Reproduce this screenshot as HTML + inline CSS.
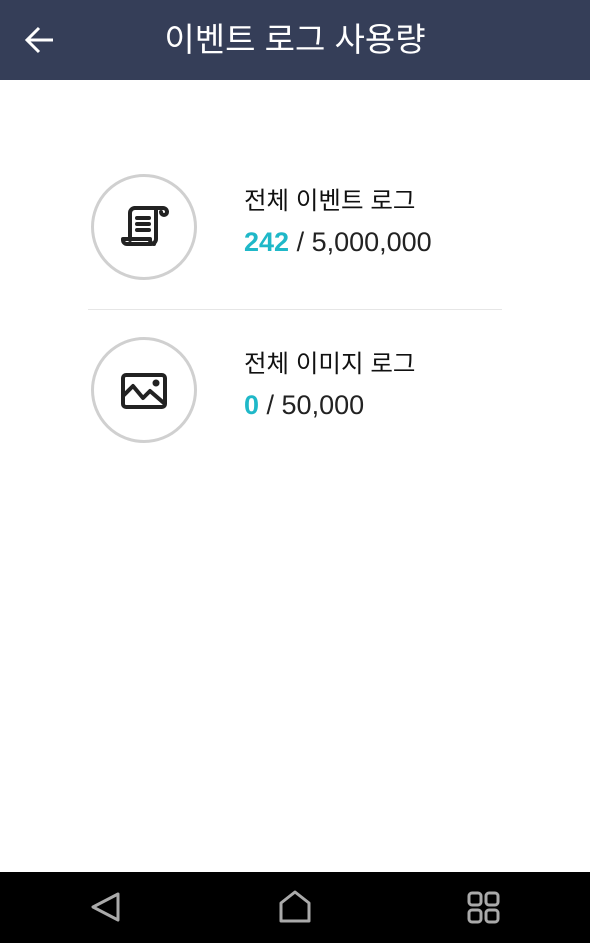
<!DOCTYPE html>
<html><head><meta charset="utf-8"><style>
body{margin:0;width:590px;height:943px;background:#fff;position:relative;overflow:hidden;font-family:"Liberation Sans","Noto Sans CJK KR",sans-serif}
.hd{position:absolute;left:0;top:0;width:590px;height:80px;background:#353e58}
.ttl{position:absolute;left:0;width:590px;top:20px;text-align:center;color:#fff;font-size:33px;line-height:40px}
.c{position:absolute;left:91px;width:100px;height:100px;border:3px solid #d0d0d0;border-radius:50%}
.t{position:absolute;left:244px;font-size:24.5px;color:#111;line-height:30px}
.n{position:absolute;left:244px;font-size:27px;color:#222;line-height:30px}
.n b{color:#1fb8c8}
.nav{position:absolute;left:0;top:872px;width:590px;height:71px;background:#000}
</style></head><body>
<div class="hd">
<svg style="position:absolute;left:24px;top:25px" width="32" height="30" viewBox="0 0 32 30"><path d="M29 15H4M15 3L3 15l12 12" fill="none" stroke="#fff" stroke-width="3"/></svg>
<div class="ttl">이벤트 로그 사용량</div>
</div>
<div class="c" style="top:174px"></div>
<svg style="position:absolute;left:118px;top:204px" width="54" height="46" viewBox="0 0 54 46"><g fill="none" stroke="#222" stroke-width="4" stroke-linejoin="round" stroke-linecap="round"><path d="M12 36V9a5 5 0 0 1 5-5h28a4 4 0 0 1 4 4 3 3 0 0 1-6 0"/><path d="M17 4v0M38 5v30a5 5 0 0 1-5 5H9a4 4 0 0 1-4-4v-1h27v1a4 4 0 0 0 4 4"/><path d="M19 14h12M19 20h12M19 26h12"/></g></svg>
<div class="t" style="top:187px">전체 이벤트 로그</div>
<div class="n" style="top:227px"><b>242</b> / 5,000,000</div>
<div style="position:absolute;left:88px;top:309px;width:414px;height:1px;background:#e6e6e6"></div>
<div class="c" style="top:337px"></div>
<svg style="position:absolute;left:120px;top:372px" width="48" height="38" viewBox="0 0 48 38"><g fill="none" stroke="#222" stroke-width="4" stroke-linejoin="round"><rect x="3" y="3" width="42" height="32" rx="3"/><path d="M3 24l10-10 10 12 7-7 15 13"/></g><circle cx="36" cy="11" r="3.5" fill="#222"/></svg>
<div class="t" style="top:350px">전체 이미지 로그</div>
<div class="n" style="top:390px"><b>0</b> / 50,000</div>
<div class="nav">
<svg style="position:absolute;left:90px;top:18px" width="32" height="34" viewBox="0 0 32 34"><path d="M28 4L3 17l25 13z" fill="none" stroke="#aaa" stroke-width="3" stroke-linejoin="round"/></svg>
<svg style="position:absolute;left:278px;top:17px" width="34" height="36" viewBox="0 0 34 36"><path d="M3 14L17 3l14 11v18H3z" fill="none" stroke="#aaa" stroke-width="3" stroke-linejoin="round"/></svg>
<svg style="position:absolute;left:467px;top:19px" width="34" height="34" viewBox="0 0 34 34"><g fill="none" stroke="#aaa" stroke-width="3"><rect x="2" y="2" width="12" height="12" rx="3"/><rect x="19" y="2" width="12" height="12" rx="3"/><rect x="2" y="19" width="12" height="12" rx="3"/><rect x="19" y="19" width="12" height="12" rx="3"/></g></svg>
</div>
</body></html>
